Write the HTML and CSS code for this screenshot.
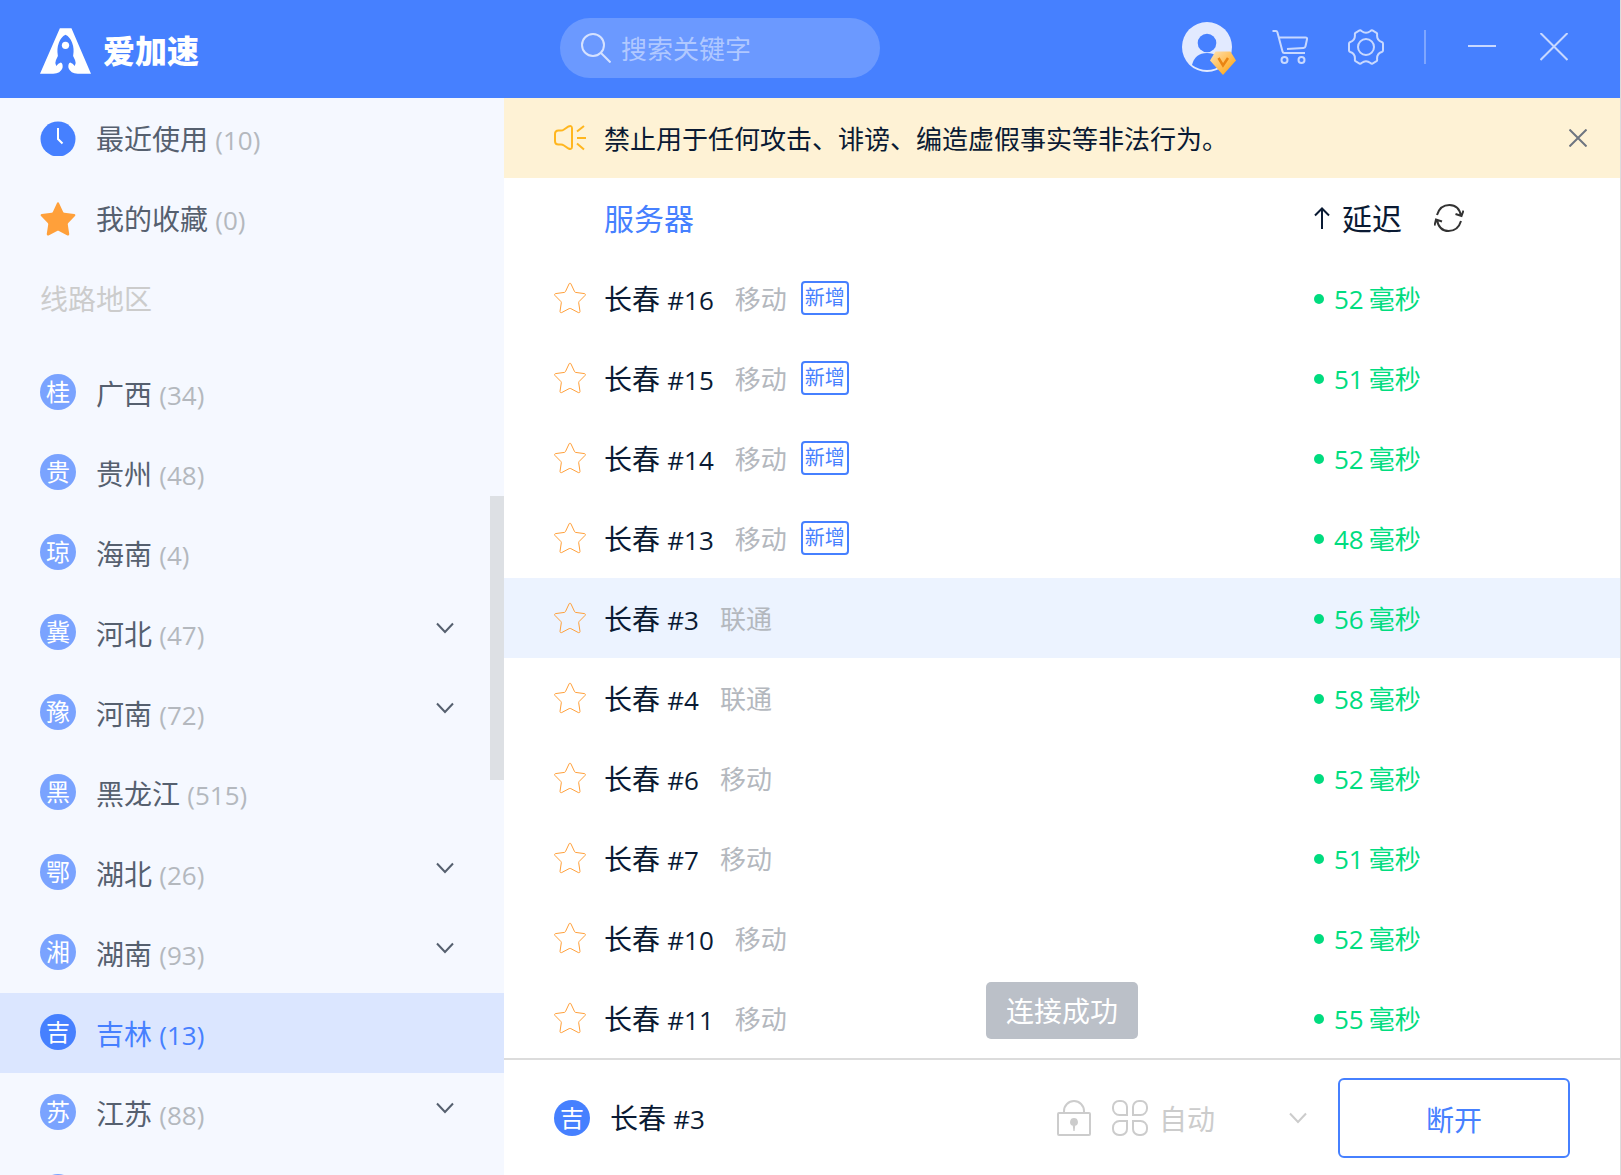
FILE: index.html
```html
<!DOCTYPE html>
<html lang="zh-CN">
<head>
<meta charset="utf-8">
<title>爱加速</title>
<link rel="stylesheet" href="styles.css">
</head>
<body>
<svg class="sprite" aria-hidden="true">
  <symbol id="star" viewBox="0 0 32 32"><path d="M16 1.2c.5 0 .8.3 1 .8l3.500 7.500c.2.500.6.800 1.100.9l8.800 1.200c1 .1 1.400 1.100.7 1.800l-6 6.100c-.3.300-.5.800-.4 1.300l1.300 8.600c.1 1-.8 1.600-1.600 1.200l-7.600-4c-.5-.2-1.100-.2-1.600 0l-7.600 4c-.8.400-1.700-.2-1.600-1.200l1.300-8.600c.1-.5-.1-1-.4-1.300l-6-6.100c-.7-.7-.3-1.700.7-1.800l8.800-1.200c.5-.1.900-.4 1.100-.9L15 2c.2-.5.500-.8 1-.8z"/></symbol>
  <symbol id="chevron" viewBox="0 0 18 12"><path d="M1 1.500l8 8.500 8-8.500"/></symbol>
</svg>
<div class="app">
  <header class="topbar">
    <div class="brand">
      <svg class="brand-mark" viewBox="0 0 154 138" aria-hidden="true">
        <path fill="#fff" fill-rule="evenodd" d="M60 0H95L154 138H114Q92 136 86 120Q84 108 91 104Q99 106 105 114Q110 106 106 97L100 84Q104 62 97 44Q91 27 77 20Q63 27 57 44Q50 62 54 84L48 97Q44 106 49 114Q55 106 63 104Q70 108 68 120Q62 136 40 138H0Z"/>
        <circle cx="77" cy="52" r="11" fill="#fff"/>
      </svg>
      <span class="brand-name">爱加速</span>
    </div>
    <label class="search">
      <svg class="icon-30" viewBox="0 0 30 30" aria-hidden="true"><circle cx="12" cy="12" r="11"/><path d="M20 20l9.500 9.500"/></svg>
      <input type="text" placeholder="搜索关键字" aria-label="搜索关键字">
    </label>
    <div class="tools">
      <button class="tool tool-user" aria-label="账户">
        <svg class="avatar" viewBox="0 0 54 54" aria-hidden="true">
          <defs><linearGradient id="gem" x1="0" y1="0" x2="1" y2="1"><stop offset="0" stop-color="#ffe3b5"/><stop offset="1" stop-color="#ff9d00"/></linearGradient></defs>
          <circle cx="25" cy="25" r="25" fill="#e2eaff"/>
          <circle cx="25" cy="21" r="9.300" fill="#4680ff"/>
          <path fill="#4680ff" d="M10 43Q13 31 25 31T40 43Q33 48 25 48T10 43z"/>
          <path fill="url(#gem)" d="M33.500 29.500h15l5.500 9-13 14.500-13-14.500z"/>
          <path fill="none" stroke="#ea8412" stroke-width="2.500" d="M36.500 36l4.500 7.500 5-7.500"/>
        </svg>
      </button>
      <button class="tool tool-cart" aria-label="购物车">
        <svg class="icon-36" viewBox="0 0 36 36" aria-hidden="true"><path d="M.5 2h3.500q1 0 1.400 1.200L10.500 22.500q.4 1.500 1.700 1.500H33M7 8.500h26.500q1.800 0 1.500 1.800l-1.500 7q-.4 1.500-2 1.600L15 20"/><circle cx="12.500" cy="31" r="3"/><circle cx="29.500" cy="31" r="3"/></svg>
      </button>
      <button class="tool tool-gear" aria-label="设置">
        <svg class="icon-36" viewBox="0 0 36 36" aria-hidden="true"><circle cx="18" cy="18" r="8"/><path d="M11.500 1.500q1-.5 2 .5 4.500 3.500 9 0 1-1 2-.5l4 2.300q.8.500.6 1.700-.5 6 4.600 7.500 1.300.5 1.300 1.500v7q0 1-1.300 1.500-5.100 1.500-4.600 7.500.2 1.200-.6 1.700l-4 2.300q-1 .5-2-.5-4.500-3.500-9 0-1 1-2 .5l-4-2.300q-.8-.5-.6-1.700.5-6-4.600-7.500-1.300-.5-1.300-1.500v-7q0-1 1.300-1.500 5.100-1.500 4.600-7.500-.2-1.200.6-1.700z"/></svg>
      </button>
      <span class="tool-divider"></span>
      <button class="tool tool-min" aria-label="最小化">
        <svg class="icon-28" viewBox="0 0 28 28" aria-hidden="true"><path d="M0 13h28"/></svg>
      </button>
      <button class="tool" aria-label="关闭">
        <svg class="icon-28" viewBox="0 0 28 28" aria-hidden="true"><path d="M.5 0l27 27M27.500 0l-27 27"/></svg>
      </button>
    </div>
  </header>

  <div class="body">
    <nav class="sidebar" aria-label="线路">
      <a class="entry" href="#recent">
        <svg class="icon-36" viewBox="0 0 36 36" aria-hidden="true"><circle cx="18" cy="19" r="17.500" fill="#4680ff"/><path class="clock-hands" d="M18 8v11l4.500 4.500"/></svg>
        <span class="label">最近使用 <span class="count">(10)</span></span>
      </a>
      <a class="entry" href="#favorites">
        <svg class="icon-36 star-solid" aria-hidden="true"><use href="#star"/></svg>
        <span class="label">我的收藏 <span class="count">(0)</span></span>
      </a>
      <h2 class="section-title">线路地区</h2>
      <a class="entry" href="#gx"><span class="badge">桂</span><span class="label">广西 <span class="count">(34)</span></span></a>
      <a class="entry" href="#gz"><span class="badge">贵</span><span class="label">贵州 <span class="count">(48)</span></span></a>
      <a class="entry" href="#hi"><span class="badge">琼</span><span class="label">海南 <span class="count">(4)</span></span></a>
      <a class="entry" href="#he"><span class="badge">冀</span><span class="label">河北 <span class="count">(47)</span></span><svg class="chevron" aria-hidden="true"><use href="#chevron"/></svg></a>
      <a class="entry" href="#ha"><span class="badge">豫</span><span class="label">河南 <span class="count">(72)</span></span><svg class="chevron" aria-hidden="true"><use href="#chevron"/></svg></a>
      <a class="entry" href="#hl"><span class="badge">黑</span><span class="label">黑龙江 <span class="count">(515)</span></span></a>
      <a class="entry" href="#hb"><span class="badge">鄂</span><span class="label">湖北 <span class="count">(26)</span></span><svg class="chevron" aria-hidden="true"><use href="#chevron"/></svg></a>
      <a class="entry" href="#hn"><span class="badge">湘</span><span class="label">湖南 <span class="count">(93)</span></span><svg class="chevron" aria-hidden="true"><use href="#chevron"/></svg></a>
      <a class="entry is-active" href="#jl" aria-current="true"><span class="badge">吉</span><span class="label">吉林 <span class="count">(13)</span></span></a>
      <a class="entry" href="#js"><span class="badge">苏</span><span class="label">江苏 <span class="count">(88)</span></span><svg class="chevron" aria-hidden="true"><use href="#chevron"/></svg></a>
      <a class="entry" href="#jx" aria-label="更多"><span class="badge"></span></a>
      <span class="scroll-thumb"></span>
    </nav>

    <main class="main">
      <div class="notice">
        <svg class="notice-icon" viewBox="0 0 32 26" aria-hidden="true"><path d="M1 9q0-3.500 3.500-3.500H7q1.500 0 3-1l4.500-3Q18 0 18 3.500v18q0 3.500-3.500 2l-4.500-3q-1.500-1-3-1H4.500Q1 19.500 1 16zM23 6.500L30 1M23 13h9M23 18.500l7 6"/></svg>
        <p class="label">禁止用于任何攻击、诽谤、编造虚假事实等非法行为。</p>
        <button class="notice-close" aria-label="关闭公告"><svg viewBox="0 0 18 18" aria-hidden="true"><path d="M.5.5l17 17M17.500.5l-17 17"/></svg></button>
      </div>

      <div class="list">
        <table class="servers">
          <colgroup><col class="col-star"><col><col class="col-delay"></colgroup>
          <thead>
            <tr>
              <th></th>
              <th class="th-server"><span class="label">服务器</span></th>
              <th>
                <div class="th-delay">
                  <svg class="sort" viewBox="0 0 16 22" aria-hidden="true"><path d="M8 22V1.500M1 8.500l7-7 7 7"/></svg>
                  <span class="label">延迟</span>
                  <button class="refresh" aria-label="刷新"><svg viewBox="0 0 30 28" aria-hidden="true"><path d="M3 11Q6 1 15.500 1T27 12M29.500 6.500l-2 5.500-6-2M27 17Q24 27 14.500 27T3 16M.5 21.500l1.500-6 6 2"/></svg></button>
                </div>
              </th>
            </tr>
          </thead>
          <tbody>
            <tr><td><button class="fav" aria-label="收藏"><svg><use href="#star"/></svg></button></td><td><div class="name"><span class="label">长春 <span class="num">#16</span></span><span class="isp label">移动</span><span class="tag">新增</span></div></td><td><span class="delay"><span class="num">52</span><span>毫秒</span></span></td></tr>
            <tr><td><button class="fav" aria-label="收藏"><svg><use href="#star"/></svg></button></td><td><div class="name"><span class="label">长春 <span class="num">#15</span></span><span class="isp label">移动</span><span class="tag">新增</span></div></td><td><span class="delay"><span class="num">51</span><span>毫秒</span></span></td></tr>
            <tr><td><button class="fav" aria-label="收藏"><svg><use href="#star"/></svg></button></td><td><div class="name"><span class="label">长春 <span class="num">#14</span></span><span class="isp label">移动</span><span class="tag">新增</span></div></td><td><span class="delay"><span class="num">52</span><span>毫秒</span></span></td></tr>
            <tr><td><button class="fav" aria-label="收藏"><svg><use href="#star"/></svg></button></td><td><div class="name"><span class="label">长春 <span class="num">#13</span></span><span class="isp label">移动</span><span class="tag">新增</span></div></td><td><span class="delay"><span class="num">48</span><span>毫秒</span></span></td></tr>
            <tr class="is-current"><td><button class="fav" aria-label="收藏"><svg><use href="#star"/></svg></button></td><td><div class="name"><span class="label">长春 <span class="num">#3</span></span><span class="isp label">联通</span></div></td><td><span class="delay"><span class="num">56</span><span>毫秒</span></span></td></tr>
            <tr><td><button class="fav" aria-label="收藏"><svg><use href="#star"/></svg></button></td><td><div class="name"><span class="label">长春 <span class="num">#4</span></span><span class="isp label">联通</span></div></td><td><span class="delay"><span class="num">58</span><span>毫秒</span></span></td></tr>
            <tr><td><button class="fav" aria-label="收藏"><svg><use href="#star"/></svg></button></td><td><div class="name"><span class="label">长春 <span class="num">#6</span></span><span class="isp label">移动</span></div></td><td><span class="delay"><span class="num">52</span><span>毫秒</span></span></td></tr>
            <tr><td><button class="fav" aria-label="收藏"><svg><use href="#star"/></svg></button></td><td><div class="name"><span class="label">长春 <span class="num">#7</span></span><span class="isp label">移动</span></div></td><td><span class="delay"><span class="num">51</span><span>毫秒</span></span></td></tr>
            <tr><td><button class="fav" aria-label="收藏"><svg><use href="#star"/></svg></button></td><td><div class="name"><span class="label">长春 <span class="num">#10</span></span><span class="isp label">移动</span></div></td><td><span class="delay"><span class="num">52</span><span>毫秒</span></span></td></tr>
            <tr><td><button class="fav" aria-label="收藏"><svg><use href="#star"/></svg></button></td><td><div class="name"><span class="label">长春 <span class="num">#11</span></span><span class="isp label">移动</span></div></td><td><span class="delay"><span class="num">55</span><span>毫秒</span></span></td></tr>
          </tbody>
        </table>
        <div class="toast" role="status">连接成功</div>
      </div>

      <footer class="status">
        <span class="badge badge-strong">吉</span>
        <span class="status-name label">长春 <span class="num">#3</span></span>
        <svg class="icon-36 muted" viewBox="0 0 36 36" aria-hidden="true"><rect x="2" y="13" width="32" height="22" rx="1"/><path d="M8 13v-2a10 10 0 0 1 20 0v2"/><path fill="#ccc" stroke="none" d="M18 18a4 4 0 0 1 1.200 7.800L18.600 31h-1.200l-.6-5.200A4 4 0 0 1 18 18z"/></svg>
        <label class="mode">
          <svg class="icon-36 muted" viewBox="0 0 36 36" aria-hidden="true"><path d="M15 15H7.500A6.500 6.500 0 0 1 1 8.500V7a6 6 0 0 1 6-6h2a6 6 0 0 1 6 6zM21 15V7a6 6 0 0 1 6-6h2a6 6 0 0 1 6 6v1.500a6.500 6.500 0 0 1-6.500 6.500zM15 21v8a6 6 0 0 1-6 6H7a6 6 0 0 1-6-6v-1.500A6.500 6.500 0 0 1 7.500 21zM21 21h7.500a6.500 6.500 0 0 1 6.500 6.500V29a6 6 0 0 1-6 6h-2a6 6 0 0 1-6-6z"/></svg>
          <select class="label" aria-label="模式"><option>自动</option></select>
          <svg class="mode-arrow muted" aria-hidden="true"><use href="#chevron"/></svg>
        </label>
        <button class="disconnect">断开</button>
      </footer>
    </main>
  </div>
</div>
</body>
</html>
```
FILE: styles.css
```css
* {
  box-sizing: border-box;
}

body {
  margin: 0;
  font-family: "Open Sans", "Noto Sans CJK SC", sans-serif;
  font-size: 28px;
  line-height: 40px;
  color: #0a1a33;
}

button,
input,
select {
  padding: 0;
  border: 0;
  background: none;
  font: inherit;
  color: inherit;
}

button {
  display: grid;
  place-items: center;
  cursor: pointer;
}

a {
  color: inherit;
  text-decoration: none;
}

svg {
  display: block;
  flex: none;
  fill: none;
  stroke-width: 2;
}

.sprite {
  position: absolute;
  width: 0;
  height: 0;
}

.icon-28 { width: 28px; height: 28px; }
.icon-30 { width: 30px; height: 30px; }
.icon-36 { width: 36px; height: 36px; }

.num,
.count {
  font-size: 26px;
}

.label {
  padding-top: 2px;
}

.app {
  display: flex;
  flex-direction: column;
  height: 100vh;
  overflow: hidden;
  border-right: 1px solid #dcdcdc;
  background: #fff;
}

/* Top bar */

.topbar {
  display: flex;
  flex: none;
  align-items: center;
  height: 98px;
  padding: 0 52px 4px 40px;
  background: #4680ff;
  color: #fff;
}

.brand {
  display: flex;
  flex: 0 0 520px;
  align-items: center;
  gap: 12px;
  padding-top: 8px;
}

.brand-mark {
  width: 51px;
  height: 46px;
}

.brand-name {
  font-size: 32px;
  font-weight: 900;
}

.search {
  display: flex;
  flex: 0 1 320px;
  align-items: center;
  gap: 10px;
  min-width: 0;
  height: 60px;
  margin-top: 2px;
  padding: 0 21px;
  border-radius: 30px;
  background: #6b99ff;
  stroke: #d6e2ff;
}

.search input {
  min-width: 0;
  flex: 1;
  padding-top: 2px;
  outline: 0;
  font-size: 26px;
}

.search input::placeholder {
  color: #b0c8ff;
  opacity: 1;
}

.tools {
  display: flex;
  align-items: center;
  margin-left: auto;
  stroke: #c8d8ff;
}

.avatar {
  width: 54px;
  height: 54px;
  stroke: none;
}

.tool-user { margin-right: 36px; padding-top: 4px; }
.tool-cart { margin-right: 40px; }
.tool-gear { margin-right: 40px; }
.tool-min { margin-right: 44px; }

.tool-divider {
  width: 2px;
  height: 34px;
  margin-right: 42px;
  background: #7ea6ff;
}

/* Sidebar */

.body {
  display: flex;
  flex: 1;
  min-height: 0;
}

.sidebar {
  position: relative;
  flex: 0 0 504px;
  overflow: hidden;
  background: #f5f8ff;
  color: #56606f;
}

.entry {
  display: flex;
  align-items: center;
  gap: 20px;
  height: 80px;
  padding: 0 50px 0 40px;
}

.entry .count {
  color: #b4b8be;
}

.entry .badge {
  margin-bottom: 2px;
}

.entry.is-active {
  background: #dbe6ff;
}

.entry.is-active,
.entry.is-active .count {
  color: #4680ff;
}

.clock-hands {
  stroke: #fff;
}

.star-solid {
  margin-top: 2px;
  fill: #ffa03a;
}

.section-title {
  height: 95px;
  margin: 0;
  padding: 21px 40px;
  font-size: 28px;
  font-weight: 400;
  color: #ccc;
}

.badge {
  display: grid;
  flex: none;
  place-items: center;
  width: 36px;
  height: 36px;
  border-radius: 50%;
  background: #7aa3ff;
  font-size: 24px;
  line-height: 36px;
  color: #fff;
}

.is-active .badge,
.badge-strong {
  background: #4680ff;
}

.chevron {
  width: 18px;
  height: 12px;
  margin: 0 0 10px auto;
  stroke: #56606f;
}

.scroll-thumb {
  position: absolute;
  top: 398px;
  right: 0;
  width: 14px;
  height: 284px;
  background: #dde0e4;
}

/* Main column */

.main {
  display: flex;
  flex: 1;
  flex-direction: column;
  min-width: 0;
}

.notice {
  display: flex;
  flex: none;
  align-items: center;
  gap: 18px;
  height: 80px;
  padding: 0 33px 0 50px;
  background: #fef2d5;
  font-size: 26px;
}

.notice p {
  margin: 0;
}

.notice-icon {
  width: 32px;
  height: 26px;
  stroke: #ffb61e;
}

.notice-close {
  margin-left: auto;
  stroke: #6e7580;
}

.notice-close svg {
  width: 18px;
  height: 18px;
}

.list {
  position: relative;
  flex: 1;
  min-height: 0;
}

.servers {
  width: 100%;
  border-collapse: collapse;
  table-layout: fixed;
}

.servers th,
.servers td {
  height: 80px;
  padding: 0;
  font-weight: 400;
  text-align: left;
}

.col-star { width: 100px; }
.col-delay { width: 306px; }

.servers th {
  font-size: 30px;
}

.th-server {
  color: #4680ff;
}

.th-server .label {
  display: block;
}

.th-delay {
  display: flex;
  align-items: center;
  gap: 12px;
}

.sort {
  width: 16px;
  height: 22px;
  stroke: #0a1a33;
}

.refresh {
  margin-left: 20px;
  stroke: #333;
}

.refresh svg {
  width: 30px;
  height: 28px;
}

.is-current {
  background: #ecf3ff;
}

.fav {
  margin-left: 50px;
  stroke: #ffa03a;
}

.fav svg {
  width: 32px;
  height: 32px;
  stroke-width: 1;
}

.name {
  display: flex;
  align-items: center;
}

.isp {
  margin-left: 21px;
  font-size: 26px;
  color: #b4b8be;
}

.tag {
  margin-left: 14px;
  padding: 0 2px;
  border: 2px solid #4680ff;
  border-radius: 4px;
  font-size: 20px;
  line-height: 30px;
  color: #4680ff;
}

.delay {
  display: flex;
  align-items: center;
  gap: 5px;
  padding-top: 1px;
  font-size: 26px;
  color: #00dc7f;
}

.delay::before {
  content: "";
  width: 10px;
  height: 10px;
  margin-right: 5px;
  border-radius: 50%;
  background: #00dc7f;
}

.toast {
  position: absolute;
  bottom: 19px;
  left: 50%;
  padding: 9px 20px 8px;
  border-radius: 5px;
  background: #bbc0c8;
  color: #fff;
  transform: translateX(-50%);
}

/* Connection bar */

.status {
  display: flex;
  flex: none;
  align-items: center;
  height: 117px;
  padding: 0 50px;
  border-top: 2px solid #dcdcdc;
}

.status-name {
  margin: 0 auto 0 20px;
}

.muted {
  stroke: #ccc;
}

.mode {
  display: flex;
  align-items: center;
  margin: 0 31px 0 20px;
  color: #ccc;
}

.mode select {
  width: 130px;
  margin-left: 11px;
  appearance: none;
}

.mode-arrow {
  width: 18px;
  height: 12px;
}

.disconnect {
  width: 232px;
  height: 80px;
  padding-top: 4px;
  border: 2px solid #4680ff;
  border-radius: 6px;
  color: #4680ff;
}
```
